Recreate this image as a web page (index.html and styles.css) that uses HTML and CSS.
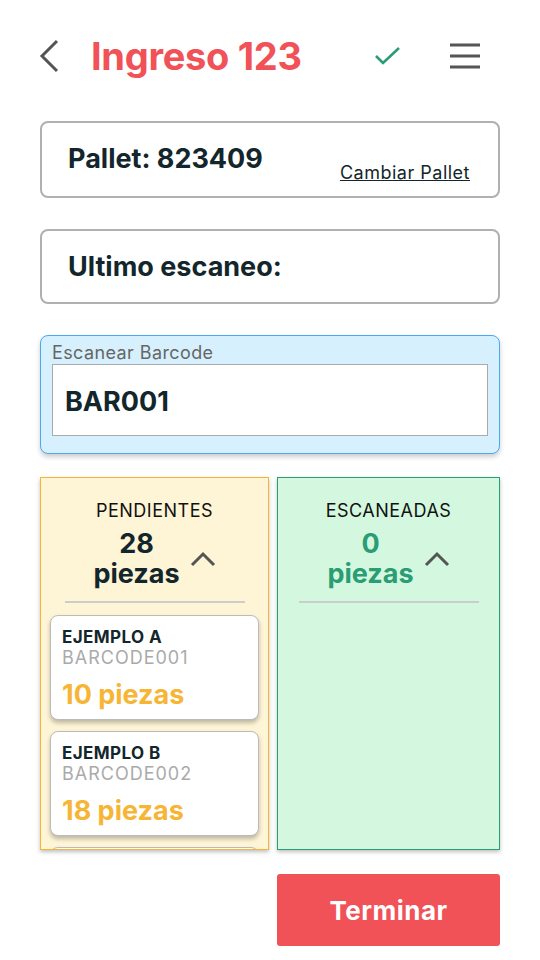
FILE: index.html
```html
<!DOCTYPE html>
<html lang="es">
<head>
  <meta charset="UTF-8" />
  <meta name="viewport" content="width=device-width, initial-scale=1.0"/>
  <title>Ingreso 123</title>
  <link rel="stylesheet" href="styles.css">
</head>
<body>
  <div class="page">
    <header class="topbar">
      <button class="icon-btn back" aria-label="Volver">
        <svg width="20" height="34" viewBox="0 0 20 34"><path d="M18 2 L3 17 L18 32" fill="none" stroke="#555" stroke-width="3"/></svg>
      </button>
      <h1 class="title">Ingreso 123</h1>
      <button class="icon-btn check" aria-label="Confirmar">
        <svg width="28" height="22" viewBox="0 0 28 22"><path d="M2 11 L9 18 L25 3" fill="none" stroke="#2a9d74" stroke-width="2.6"/></svg>
      </button>
      <button class="icon-btn menu" aria-label="Menu">
        <svg width="30" height="26" viewBox="0 0 30 26"><path d="M0 2 H30 M0 13 H30 M0 24 H30" fill="none" stroke="#555" stroke-width="3"/></svg>
      </button>
    </header>

    <div class="card pallet">
      <span class="card-title">Pallet: 823409</span>
      <a href="#" class="change-link">Cambiar Pallet</a>
    </div>

    <div class="card last-scan">
      <span class="card-title">Ultimo escaneo:</span>
    </div>

    <div class="scan-box">
      <label for="barcode" class="scan-label">Escanear Barcode</label>
      <input type="text" id="barcode" class="scan-input" value="BAR001" />
    </div>

    <div class="columns">
      <section class="column pending">
        <div class="col-head">
          <div class="col-title">PENDIENTES</div>
          <div class="col-count">
            <div class="count">28<br>piezas</div>
            <svg class="chev" width="26" height="16" viewBox="0 0 26 16"><path d="M2 14 L13 3 L24 14" fill="none" stroke="#555" stroke-width="3"/></svg>
          </div>
          <div class="divider"></div>
        </div>
        <ul class="item-list" id="pendingList"></ul>
      </section>

      <section class="column scanned">
        <div class="col-head">
          <div class="col-title">ESCANEADAS</div>
          <div class="col-count">
            <div class="count">0<br>piezas</div>
            <svg class="chev" width="26" height="16" viewBox="0 0 26 16"><path d="M2 14 L13 3 L24 14" fill="none" stroke="#555" stroke-width="3"/></svg>
          </div>
          <div class="divider"></div>
        </div>
        <ul class="item-list" id="scannedList"></ul>
      </section>
    </div>

    <div class="actions">
      <button class="finish-btn">Terminar</button>
    </div>
  </div>

  <script>
    const pending = [
      { name: "EJEMPLO A", code: "BARCODE001", qty: 10 },
      { name: "EJEMPLO B", code: "BARCODE002", qty: 18 }
    ];

    const pendingList = document.getElementById("pendingList");

    pending.forEach(item => {
      const li = document.createElement("li");
      li.className = "item";
      li.innerHTML = `
        <div class="item-name">${item.name}</div>
        <div class="item-code">${item.code}</div>
        <div class="item-qty">${item.qty} piezas</div>
      `;
      pendingList.appendChild(li);
    });

    // next card peeks in under the scroll edge
    const more = document.createElement("li");
    more.className = "item";
    pendingList.appendChild(more);
  </script>
</body>
</html>
```

FILE: styles.css
```css
:root {
  --red: #f05258;
  --green: #2a9d74;
  --orange: #f7b535;
  --ink: #12262b;
  --gray: #555;
}

body {
  margin: 0;
  background: #fff;
  color: var(--ink);
  font-family: Inter, "Noto Sans", sans-serif;
}

.page {
  padding: 20px 40px 0 40px;
}

.topbar {
  display: flex;
  align-items: center;
  height: 72px;
}

.icon-btn {
  background: none;
  border: none;
  padding: 0;
  display: flex;
  cursor: pointer;
}

.back {
  margin-right: 32px;
  margin-left: -1px;
}

.title {
  margin: 0;
  flex: 1;
  color: var(--red);
  font-size: 38px;
  font-weight: 700;
  letter-spacing: -0.3px;
}

.check {
  margin-right: 48px;
}

.menu {
  margin-right: 20px;
}

.card {
  box-sizing: border-box;
  border: 2px solid #b0b0b0;
  border-radius: 8px;
  height: 77px;
  display: flex;
  align-items: center;
  justify-content: space-between;
  padding: 0 28px 0 26px;
}

.pallet {
  margin-top: 29px;
}

.last-scan {
  margin-top: 31px;
  height: 75px;
}

.card-title {
  font-size: 27px;
  font-weight: 700;
}

.pallet .card-title {
  margin-top: -2px;
}

.change-link {
  color: var(--ink);
  font-size: 18px;
  letter-spacing: 0.5px;
  margin-top: 26px;
}

.scan-box {
  box-sizing: border-box;
  margin-top: 31px;
  height: 119px;
  background: #d6f1fd;
  border: 1px solid #4aa8f5;
  border-radius: 8px;
  padding: 5px 11px 0;
  box-shadow: 0 3px 5px rgba(0, 0, 0, 0.2);
}

.scan-label {
  display: block;
  font-size: 18px;
  letter-spacing: 0.4px;
  color: #666;
  line-height: 23px;
}

.scan-input {
  box-sizing: border-box;
  width: 100%;
  height: 72px;
  border: 1px solid #aaa;
  background: #fff;
  padding: 2px 12px 0;
  font-family: inherit;
  font-size: 27px;
  font-weight: 700;
  color: var(--ink);
}

.columns {
  margin-top: 23px;
  display: grid;
  grid-template-columns: 229px 1fr;
  gap: 8px;
}

.column {
  box-sizing: border-box;
  height: 373px;
  overflow: hidden;
  box-shadow: 0 2px 4px rgba(0, 0, 0, 0.25);
}

.pending {
  background: #fef4d6;
  border: 1px solid var(--orange);
}

.scanned {
  background: #d4f8df;
  border: 1px solid var(--green);
}

.col-head {
  padding-top: 23px;
  text-align: center;
}

.col-title {
  font-size: 18px;
  letter-spacing: 0.5px;
  line-height: 20px;
  color: #111;
}

.col-count {
  display: flex;
  justify-content: center;
  align-items: center;
  gap: 10px;
  margin-top: 8px;
}

.count {
  font-size: 27px;
  font-weight: 700;
  line-height: 30px;
}

.scanned .count {
  color: var(--green);
}

.divider {
  width: 180px;
  height: 2px;
  background: #ccc;
  margin: 12px auto 0;
}

.item-list {
  list-style: none;
  margin: 12px 0 0;
  padding: 0 9px;
}

.item {
  box-sizing: border-box;
  height: 105px;
  background: #fff;
  border: 1px solid #bbb;
  border-radius: 8px;
  box-shadow: 0 3px 4px rgba(0, 0, 0, 0.25);
  padding: 11px 11px 0;
  margin-bottom: 11px;
}

.item-name {
  font-size: 17px;
  font-weight: 700;
  letter-spacing: 0.4px;
  line-height: 20px;
}

.item-code {
  font-size: 18px;
  letter-spacing: 1px;
  color: #aaa;
  line-height: 21px;
}

.item-qty {
  margin-top: 11px;
  font-size: 27px;
  font-weight: 700;
  line-height: 32px;
  color: var(--orange);
}

.actions {
  display: flex;
  justify-content: flex-end;
  margin-top: 24px;
}

.finish-btn {
  width: 223px;
  height: 72px;
  border: none;
  border-radius: 3px;
  background: var(--red);
  color: #fff;
  font-family: inherit;
  font-size: 26px;
  font-weight: 700;
  letter-spacing: 0.5px;
  cursor: pointer;
}
```
